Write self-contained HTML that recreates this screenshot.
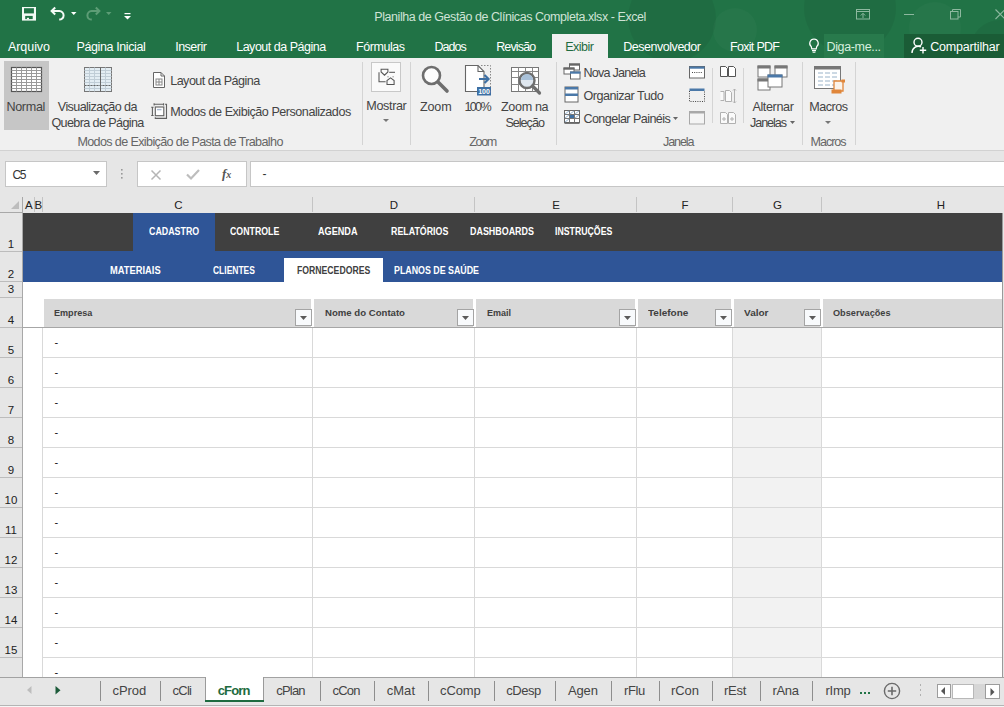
<!DOCTYPE html>
<html><head><meta charset="utf-8"><style>
html,body{margin:0;padding:0;}
body{width:1004px;height:707px;overflow:hidden;position:relative;background:#e6e6e6;font-family:'Liberation Sans',sans-serif;}
.t{position:absolute;white-space:nowrap;font-family:'Liberation Sans',sans-serif;}
.r{position:absolute;}
svg{position:absolute;overflow:visible;}

</style></head><body>
<!-- title + tabs green -->
<div class="r" style="left:0;top:0;width:1004px;height:58px;background:#217346"></div>
<!-- deco -->
<svg style="left:0;top:0" width="1004" height="58"><g fill="#000" fill-opacity="0.055">
<circle cx="672" cy="18" r="44"/><circle cx="850" cy="8" r="46"/><circle cx="1000" cy="50" r="30"/></g>
<g fill="#fff" fill-opacity="0.025"><circle cx="735" cy="30" r="22"/><circle cx="935" cy="28" r="26"/></g></svg>
<!-- Exibir tab -->
<div class="r" style="left:552px;top:34px;width:56px;height:24px;background:#f0f0f0"></div>
<!-- Diga-me box -->
<div class="r" style="left:824px;top:34px;width:60px;height:24px;background:#287a4c"></div>
<!-- Compartilhar box -->
<div class="r" style="left:904px;top:34px;width:100px;height:24px;background:#1a5c36"></div>
<!-- ribbon -->
<div class="r" style="left:0;top:58px;width:1004px;height:92px;background:#f0f0f0"></div>
<div class="r" style="left:0;top:150px;width:1004px;height:1px;background:#d2d2d2"></div>
<!-- Normal highlighted -->
<div class="r" style="left:4px;top:61px;width:45px;height:69px;background:#c6c6c6"></div>
<!-- separators -->
<div class="r" style="left:362px;top:62px;width:1px;height:83px;background:#d4d4d4"></div>
<div class="r" style="left:410px;top:62px;width:1px;height:83px;background:#d4d4d4"></div>
<div class="r" style="left:556px;top:62px;width:1px;height:83px;background:#d4d4d4"></div>
<div class="r" style="left:712px;top:68px;width:1px;height:55px;background:#d4d4d4"></div>
<div class="r" style="left:743px;top:68px;width:1px;height:55px;background:#d4d4d4"></div>
<div class="r" style="left:802px;top:62px;width:1px;height:83px;background:#d4d4d4"></div>
<div class="r" style="left:855px;top:62px;width:1px;height:83px;background:#d4d4d4"></div>
<!-- formula bar -->
<div class="r" style="left:5px;top:161px;width:100px;height:24px;background:#fff;border:1px solid #c6c6c6"></div>
<div class="r" style="left:137px;top:161px;width:108px;height:24px;background:#fff;border:1px solid #c6c6c6"></div>
<div class="r" style="left:250px;top:161px;width:760px;height:24px;background:#fff;border:1px solid #c6c6c6"></div>
<!-- sheet area white -->
<div class="r" style="left:23px;top:213px;width:979px;height:464px;background:#fff"></div>
<!-- G column fill -->
<div class="r" style="left:733px;top:328px;width:88px;height:349px;background:#f2f2f2"></div>
<!-- dark menu row -->
<div class="r" style="left:23px;top:213px;width:979px;height:38px;background:#404040"></div>
<div class="r" style="left:133px;top:213px;width:82px;height:38px;background:#2f5597"></div>
<div class="r" style="left:23px;top:251px;width:979px;height:31px;background:#2f5597"></div>
<div class="r" style="left:284px;top:258px;width:99px;height:24px;background:#fff"></div>
<!-- right sheet border -->
<div class="r" style="left:1002px;top:213px;width:1px;height:464px;background:#9a9a9a"></div>
<!-- GRID -->
<div class="r" style="left:34px;top:197px;width:1px;height:15px;background:#c4c4c4;"></div>
<div class="r" style="left:42px;top:197px;width:1px;height:15px;background:#c4c4c4;"></div>
<div class="r" style="left:312px;top:197px;width:1px;height:15px;background:#c4c4c4;"></div>
<div class="r" style="left:474px;top:197px;width:1px;height:15px;background:#c4c4c4;"></div>
<div class="r" style="left:636px;top:197px;width:1px;height:15px;background:#c4c4c4;"></div>
<div class="r" style="left:732px;top:197px;width:1px;height:15px;background:#c4c4c4;"></div>
<div class="r" style="left:821px;top:197px;width:1px;height:15px;background:#c4c4c4;"></div>
<div class="r" style="left:0px;top:212px;width:23px;height:1px;background:#a8a8a8;"></div>
<div class="r" style="left:22px;top:197px;width:1px;height:480px;background:#a8a8a8;"></div>
<svg style="left:11px;top:201px" width="9" height="9"><path d="M8 0 L8 8 L0 8 Z" fill="#bdbdbd"/></svg>
<div class="r" style="left:0px;top:251px;width:22px;height:1px;background:#bcbcbc;"></div>
<div class="r" style="left:0px;top:281px;width:22px;height:1px;background:#bcbcbc;"></div>
<div class="r" style="left:0px;top:297px;width:22px;height:1px;background:#bcbcbc;"></div>
<div class="r" style="left:0px;top:327px;width:22px;height:1px;background:#bcbcbc;"></div>
<div class="r" style="left:0px;top:357px;width:22px;height:1px;background:#bcbcbc;"></div>
<div class="r" style="left:0px;top:387px;width:22px;height:1px;background:#bcbcbc;"></div>
<div class="r" style="left:0px;top:417px;width:22px;height:1px;background:#bcbcbc;"></div>
<div class="r" style="left:0px;top:447px;width:22px;height:1px;background:#bcbcbc;"></div>
<div class="r" style="left:0px;top:477px;width:22px;height:1px;background:#bcbcbc;"></div>
<div class="r" style="left:0px;top:507px;width:22px;height:1px;background:#bcbcbc;"></div>
<div class="r" style="left:0px;top:537px;width:22px;height:1px;background:#bcbcbc;"></div>
<div class="r" style="left:0px;top:567px;width:22px;height:1px;background:#bcbcbc;"></div>
<div class="r" style="left:0px;top:597px;width:22px;height:1px;background:#bcbcbc;"></div>
<div class="r" style="left:0px;top:627px;width:22px;height:1px;background:#bcbcbc;"></div>
<div class="r" style="left:0px;top:657px;width:22px;height:1px;background:#bcbcbc;"></div>
<div class="r" style="left:42px;top:357px;width:960px;height:1px;background:#d9d9d9;"></div>
<div class="r" style="left:42px;top:387px;width:960px;height:1px;background:#d9d9d9;"></div>
<div class="r" style="left:42px;top:417px;width:960px;height:1px;background:#d9d9d9;"></div>
<div class="r" style="left:42px;top:447px;width:960px;height:1px;background:#d9d9d9;"></div>
<div class="r" style="left:42px;top:477px;width:960px;height:1px;background:#d9d9d9;"></div>
<div class="r" style="left:42px;top:507px;width:960px;height:1px;background:#d9d9d9;"></div>
<div class="r" style="left:42px;top:537px;width:960px;height:1px;background:#d9d9d9;"></div>
<div class="r" style="left:42px;top:567px;width:960px;height:1px;background:#d9d9d9;"></div>
<div class="r" style="left:42px;top:597px;width:960px;height:1px;background:#d9d9d9;"></div>
<div class="r" style="left:42px;top:627px;width:960px;height:1px;background:#d9d9d9;"></div>
<div class="r" style="left:42px;top:657px;width:960px;height:1px;background:#d9d9d9;"></div>
<div class="r" style="left:42px;top:328px;width:1px;height:349px;background:#d9d9d9;"></div>
<div class="r" style="left:312px;top:328px;width:1px;height:349px;background:#d9d9d9;"></div>
<div class="r" style="left:474px;top:328px;width:1px;height:349px;background:#d9d9d9;"></div>
<div class="r" style="left:636px;top:328px;width:1px;height:349px;background:#d9d9d9;"></div>
<div class="r" style="left:732px;top:328px;width:1px;height:349px;background:#d9d9d9;"></div>
<div class="r" style="left:821px;top:328px;width:1px;height:349px;background:#d9d9d9;"></div>
<div class="r" style="left:44px;top:299px;width:267px;height:28px;background:#d9d9d9;"></div>
<div class="r" style="left:314px;top:299px;width:159px;height:28px;background:#d9d9d9;"></div>
<div class="r" style="left:476px;top:299px;width:159px;height:28px;background:#d9d9d9;"></div>
<div class="r" style="left:638px;top:299px;width:93px;height:28px;background:#d9d9d9;"></div>
<div class="r" style="left:734px;top:299px;width:86px;height:28px;background:#d9d9d9;"></div>
<div class="r" style="left:823px;top:299px;width:179px;height:28px;background:#d9d9d9;"></div>
<div class="r" style="left:23px;top:327px;width:979px;height:1px;background:#a6a6a6;"></div>
<div class="r" style="left:295px;top:309px;width:15px;height:15px;background:#f8fafc;border:1px solid #a4a4a4"></div>
<svg style="left:300px;top:316px" width="8" height="5"><path d="M0 0 L7 0 L3.5 4 Z" fill="#5a5a5a"/></svg>
<div class="r" style="left:457px;top:309px;width:15px;height:15px;background:#f8fafc;border:1px solid #a4a4a4"></div>
<svg style="left:462px;top:316px" width="8" height="5"><path d="M0 0 L7 0 L3.5 4 Z" fill="#5a5a5a"/></svg>
<div class="r" style="left:619px;top:309px;width:15px;height:15px;background:#f8fafc;border:1px solid #a4a4a4"></div>
<svg style="left:624px;top:316px" width="8" height="5"><path d="M0 0 L7 0 L3.5 4 Z" fill="#5a5a5a"/></svg>
<div class="r" style="left:715px;top:309px;width:15px;height:15px;background:#f8fafc;border:1px solid #a4a4a4"></div>
<svg style="left:720px;top:316px" width="8" height="5"><path d="M0 0 L7 0 L3.5 4 Z" fill="#5a5a5a"/></svg>
<div class="r" style="left:804px;top:309px;width:15px;height:15px;background:#f8fafc;border:1px solid #a4a4a4"></div>
<svg style="left:809px;top:316px" width="8" height="5"><path d="M0 0 L7 0 L3.5 4 Z" fill="#5a5a5a"/></svg>
<!-- tab bar -->
<div class="r" style="left:0;top:677px;width:1004px;height:1px;background:#a2a2a2"></div>
<div class="r" style="left:0;top:678px;width:1004px;height:27px;background:#e6e6e6"></div>
<div class="r" style="left:0;top:705px;width:1004px;height:1px;background:#b4b4b4"></div>
<div class="r" style="left:0;top:706px;width:1004px;height:1px;background:#f6f6f6"></div>

<div class="r" style="left:100px;top:681px;width:1px;height:20px;background:#8e8e8e;"></div>
<div class="r" style="left:160px;top:681px;width:1px;height:20px;background:#8e8e8e;"></div>
<div class="r" style="left:320px;top:681px;width:1px;height:20px;background:#8e8e8e;"></div>
<div class="r" style="left:374px;top:681px;width:1px;height:20px;background:#8e8e8e;"></div>
<div class="r" style="left:428px;top:681px;width:1px;height:20px;background:#8e8e8e;"></div>
<div class="r" style="left:494px;top:681px;width:1px;height:20px;background:#8e8e8e;"></div>
<div class="r" style="left:555px;top:681px;width:1px;height:20px;background:#8e8e8e;"></div>
<div class="r" style="left:611px;top:681px;width:1px;height:20px;background:#8e8e8e;"></div>
<div class="r" style="left:659px;top:681px;width:1px;height:20px;background:#8e8e8e;"></div>
<div class="r" style="left:712px;top:681px;width:1px;height:20px;background:#8e8e8e;"></div>
<div class="r" style="left:760px;top:681px;width:1px;height:20px;background:#8e8e8e;"></div>
<div class="r" style="left:812px;top:681px;width:1px;height:20px;background:#8e8e8e;"></div>
<div class="r" style="left:205px;top:677px;width:1px;height:25px;background:#9a9a9a;"></div>
<div class="r" style="left:263px;top:677px;width:1px;height:25px;background:#9a9a9a;"></div>
<div class="r" style="left:206px;top:677px;width:57px;height:23px;background:#ffffff;"></div>
<div class="r" style="left:205px;top:700px;width:59px;height:2px;background:#1e6b40;"></div>
<svg style="left:27px;top:686px" width="5" height="8" viewBox="0 0 5 8"><path d="M4.5 0 L4.5 8 L0 4 Z" fill="#bdbdbd"/></svg>
<svg style="left:55px;top:686px" width="6" height="9" viewBox="0 0 6 9"><path d="M0.5 0 L0.5 8.5 L5.5 4.25 Z" fill="#1d5b3a"/></svg>
<div class="r" style="left:860px;top:692px;width:2px;height:2px;background:#217346;"></div>
<div class="r" style="left:864px;top:692px;width:2px;height:2px;background:#217346;"></div>
<div class="r" style="left:868px;top:692px;width:2px;height:2px;background:#217346;"></div>
<svg style="left:883px;top:682px" width="18" height="18" viewBox="0 0 18 18"><circle cx="9" cy="9" r="7.6" fill="none" stroke="#6a6a6a" stroke-width="1.4"/><path d="M9 4.8 V13.2 M4.8 9 H13.2" stroke="#6a6a6a" stroke-width="1.6"/></svg>
<div class="r" style="left:920px;top:684px;width:1px;height:2px;background:#b0b0b0;"></div>
<div class="r" style="left:920px;top:689px;width:1px;height:2px;background:#b0b0b0;"></div>
<div class="r" style="left:920px;top:694px;width:1px;height:2px;background:#b0b0b0;"></div>
<div class="r" style="left:937px;top:684px;width:14px;height:14px;background:#fff;box-sizing:border-box;border:1px solid #9c9c9c"></div>
<svg style="left:941px;top:687px" width="5" height="8" viewBox="0 0 5 8"><path d="M4 0 L4 8 L0 4 Z" fill="#555"/></svg>
<div class="r" style="left:952px;top:684px;width:22px;height:15px;background:#fff;box-sizing:border-box;border:1px solid #b8b8b8"></div>
<div class="r" style="left:974px;top:684px;width:11px;height:15px;background:#d6d6d6;"></div>
<div class="r" style="left:985px;top:684px;width:15px;height:15px;background:#fff;box-sizing:border-box;border:1px solid #9c9c9c"></div>
<svg style="left:990px;top:688px" width="5" height="8" viewBox="0 0 5 8"><path d="M0.5 0 L0.5 8 L4.5 4 Z" fill="#555"/></svg>
<div class="t" style="left:374.3px;top:11.4px;font-size:12.5px;line-height:12.5px;color:#cfe3d6;letter-spacing:-0.443px;">Planilha de Gestão de Clínicas Completa.xlsx - Excel</div>
<div class="t" style="left:8.0px;top:41.1px;font-size:12.5px;line-height:12.5px;color:#ffffff;letter-spacing:-0.065px;">Arquivo</div>
<div class="t" style="left:76.5px;top:41.1px;font-size:12.5px;line-height:12.5px;color:#ffffff;letter-spacing:-0.389px;">Página Inicial</div>
<div class="t" style="left:175.2px;top:41.1px;font-size:12.5px;line-height:12.5px;color:#ffffff;letter-spacing:-0.506px;">Inserir</div>
<div class="t" style="left:236.2px;top:41.1px;font-size:12.5px;line-height:12.5px;color:#ffffff;letter-spacing:-0.487px;">Layout da Página</div>
<div class="t" style="left:356.0px;top:41.1px;font-size:12.5px;line-height:12.5px;color:#ffffff;letter-spacing:-0.442px;">Fórmulas</div>
<div class="t" style="left:434.4px;top:41.1px;font-size:12.5px;line-height:12.5px;color:#ffffff;letter-spacing:-0.935px;">Dados</div>
<div class="t" style="left:496.2px;top:41.1px;font-size:12.5px;line-height:12.5px;color:#ffffff;letter-spacing:-0.862px;">Revisão</div>
<div class="t" style="left:623.3px;top:41.1px;font-size:12.5px;line-height:12.5px;color:#ffffff;letter-spacing:-0.474px;">Desenvolvedor</div>
<div class="t" style="left:730.0px;top:41.1px;font-size:12.5px;line-height:12.5px;color:#ffffff;letter-spacing:-0.695px;">Foxit PDF</div>
<div class="t" style="left:826.5px;top:41.1px;font-size:12.5px;line-height:12.5px;color:#d6efdf;letter-spacing:-0.351px;">Diga-me...</div>
<div class="t" style="left:930.2px;top:41.1px;font-size:12.5px;line-height:12.5px;color:#ffffff;letter-spacing:-0.178px;">Compartilhar</div>
<div class="t" style="left:565.2px;top:41.1px;font-size:12.5px;line-height:12.5px;color:#1e6b40;letter-spacing:-0.493px;">Exibir</div>
<div class="t" style="left:6.4px;top:101.1px;font-size:12.6px;line-height:12.6px;color:#444444;letter-spacing:-0.319px;">Normal</div>
<div class="t" style="left:57.8px;top:101.1px;font-size:12.6px;line-height:12.6px;color:#444444;letter-spacing:-0.592px;">Visualização da</div>
<div class="t" style="left:51.4px;top:117.1px;font-size:12.6px;line-height:12.6px;color:#444444;letter-spacing:-0.616px;">Quebra de Página</div>
<div class="t" style="left:170.2px;top:75.1px;font-size:12.6px;line-height:12.6px;color:#444444;letter-spacing:-0.536px;">Layout da Página</div>
<div class="t" style="left:170.2px;top:106.1px;font-size:12.6px;line-height:12.6px;color:#444444;letter-spacing:-0.484px;">Modos de Exibição Personalizados</div>
<div class="t" style="left:77.4px;top:136.1px;font-size:12.6px;line-height:12.6px;color:#666666;letter-spacing:-0.639px;">Modos de Exibição de Pasta de Trabalho</div>
<div class="t" style="left:366.3px;top:99.6px;font-size:12.6px;line-height:12.6px;color:#444444;letter-spacing:-0.365px;">Mostrar</div>
<div class="t" style="left:420.0px;top:101.1px;font-size:12.6px;line-height:12.6px;color:#444444;letter-spacing:-0.168px;">Zoom</div>
<div class="t" style="left:464.5px;top:101.1px;font-size:12.6px;line-height:12.6px;color:#444444;letter-spacing:-1.706px;">100%</div>
<div class="t" style="left:501.0px;top:101.1px;font-size:12.6px;line-height:12.6px;color:#444444;letter-spacing:-0.351px;">Zoom na</div>
<div class="t" style="left:505.4px;top:117.1px;font-size:12.6px;line-height:12.6px;color:#444444;letter-spacing:-1.003px;">Seleção</div>
<div class="t" style="left:469.3px;top:136.1px;font-size:12.6px;line-height:12.6px;color:#666666;letter-spacing:-1.401px;">Zoom</div>
<div class="t" style="left:583.4px;top:67.1px;font-size:12.6px;line-height:12.6px;color:#444444;letter-spacing:-0.762px;">Nova Janela</div>
<div class="t" style="left:583.4px;top:90.1px;font-size:12.6px;line-height:12.6px;color:#444444;letter-spacing:-0.493px;">Organizar Tudo</div>
<div class="t" style="left:583.4px;top:113.1px;font-size:12.6px;line-height:12.6px;color:#444444;letter-spacing:-0.568px;">Congelar Painéis</div>
<div class="t" style="left:663.0px;top:136.1px;font-size:12.6px;line-height:12.6px;color:#666666;letter-spacing:-1.125px;">Janela</div>
<div class="t" style="left:752.4px;top:101.1px;font-size:12.6px;line-height:12.6px;color:#444444;letter-spacing:-0.373px;">Alternar</div>
<div class="t" style="left:750.0px;top:116.6px;font-size:12.6px;line-height:12.6px;color:#444444;letter-spacing:-1.070px;">Janelas</div>
<div class="t" style="left:809.3px;top:101.1px;font-size:12.6px;line-height:12.6px;color:#444444;letter-spacing:-0.519px;">Macros</div>
<div class="t" style="left:810.6px;top:135.6px;font-size:12.6px;line-height:12.6px;color:#666666;letter-spacing:-1.059px;">Macros</div>
<div class="t" style="left:12.5px;top:168.8px;font-size:12px;line-height:12px;color:#333;letter-spacing:-1.344px;">C5</div>
<div class="t" style="left:262.4px;top:167.8px;font-size:12px;line-height:12px;color:#333;">-</div>
<div class="t" style="left:25.0px;top:199.5px;font-size:11.5px;line-height:11.5px;color:#222;">A</div>
<div class="t" style="left:34.5px;top:199.5px;font-size:11.5px;line-height:11.5px;color:#222;">B</div>
<div class="t" style="left:174.3px;top:199.5px;font-size:11.5px;line-height:11.5px;color:#222;">C</div>
<div class="t" style="left:389.8px;top:199.5px;font-size:11.5px;line-height:11.5px;color:#222;">D</div>
<div class="t" style="left:552.2px;top:199.5px;font-size:11.5px;line-height:11.5px;color:#222;">E</div>
<div class="t" style="left:681.5px;top:199.5px;font-size:11.5px;line-height:11.5px;color:#222;">F</div>
<div class="t" style="left:773.0px;top:199.5px;font-size:11.5px;line-height:11.5px;color:#222;">G</div>
<div class="t" style="left:936.8px;top:199.5px;font-size:11.5px;line-height:11.5px;color:#222;">H</div>
<div class="t" style="left:7.8px;top:239.4px;font-size:11.5px;line-height:11.5px;color:#222;">1</div>
<div class="t" style="left:7.8px;top:269.4px;font-size:11.5px;line-height:11.5px;color:#222;">2</div>
<div class="t" style="left:7.8px;top:283.9px;font-size:11.5px;line-height:11.5px;color:#222;">3</div>
<div class="t" style="left:7.8px;top:315.2px;font-size:11.5px;line-height:11.5px;color:#222;">4</div>
<div class="t" style="left:7.8px;top:345.2px;font-size:11.5px;line-height:11.5px;color:#222;">5</div>
<div class="t" style="left:7.8px;top:375.2px;font-size:11.5px;line-height:11.5px;color:#222;">6</div>
<div class="t" style="left:7.8px;top:405.2px;font-size:11.5px;line-height:11.5px;color:#222;">7</div>
<div class="t" style="left:7.8px;top:435.2px;font-size:11.5px;line-height:11.5px;color:#222;">8</div>
<div class="t" style="left:7.8px;top:465.2px;font-size:11.5px;line-height:11.5px;color:#222;">9</div>
<div class="t" style="left:4.6px;top:495.2px;font-size:11.5px;line-height:11.5px;color:#222;">10</div>
<div class="t" style="left:5.0px;top:525.2px;font-size:11.5px;line-height:11.5px;color:#222;">11</div>
<div class="t" style="left:4.6px;top:555.2px;font-size:11.5px;line-height:11.5px;color:#222;">12</div>
<div class="t" style="left:4.6px;top:585.2px;font-size:11.5px;line-height:11.5px;color:#222;">13</div>
<div class="t" style="left:4.6px;top:615.2px;font-size:11.5px;line-height:11.5px;color:#222;">14</div>
<div class="t" style="left:4.6px;top:645.2px;font-size:11.5px;line-height:11.5px;color:#222;">15</div>
<div class="t" style="left:148.7px;top:227.1px;font-size:10px;line-height:10px;font-weight:bold;color:#ffffff;transform:scaleX(0.8858);transform-origin:0 0;">CADASTRO</div>
<div class="t" style="left:230.4px;top:227.1px;font-size:10px;line-height:10px;font-weight:bold;color:#ffffff;transform:scaleX(0.8786);transform-origin:0 0;">CONTROLE</div>
<div class="t" style="left:317.6px;top:227.1px;font-size:10px;line-height:10px;font-weight:bold;color:#ffffff;transform:scaleX(0.9113);transform-origin:0 0;">AGENDA</div>
<div class="t" style="left:391.2px;top:227.1px;font-size:10px;line-height:10px;font-weight:bold;color:#ffffff;transform:scaleX(0.8839);transform-origin:0 0;">RELATÓRIOS</div>
<div class="t" style="left:470.0px;top:227.1px;font-size:10px;line-height:10px;font-weight:bold;color:#ffffff;transform:scaleX(0.8916);transform-origin:0 0;">DASHBOARDS</div>
<div class="t" style="left:555.4px;top:227.1px;font-size:10px;line-height:10px;font-weight:bold;color:#ffffff;transform:scaleX(0.8740);transform-origin:0 0;">INSTRUÇÕES</div>
<div class="t" style="left:109.9px;top:265.9px;font-size:10px;line-height:10px;font-weight:bold;color:#fff;transform:scaleX(0.9325);transform-origin:0 0;">MATERIAIS</div>
<div class="t" style="left:213.4px;top:265.9px;font-size:10px;line-height:10px;font-weight:bold;color:#fff;transform:scaleX(0.8473);transform-origin:0 0;">CLIENTES</div>
<div class="t" style="left:297.2px;top:265.9px;font-size:10px;line-height:10px;font-weight:bold;color:#404040;transform:scaleX(0.8668);transform-origin:0 0;">FORNECEDORES</div>
<div class="t" style="left:394.0px;top:265.9px;font-size:10px;line-height:10px;font-weight:bold;color:#fff;transform:scaleX(0.8843);transform-origin:0 0;">PLANOS DE SAÚDE</div>
<div class="t" style="left:54.3px;top:307.8px;font-size:9.6px;line-height:9.6px;font-weight:bold;color:#404040;transform:scaleX(0.9449);transform-origin:0 0;">Empresa</div>
<div class="t" style="left:324.5px;top:307.8px;font-size:9.6px;line-height:9.6px;font-weight:bold;color:#404040;transform:scaleX(1.0006);transform-origin:0 0;">Nome do Contato</div>
<div class="t" style="left:486.5px;top:307.8px;font-size:9.6px;line-height:9.6px;font-weight:bold;color:#404040;transform:scaleX(0.9372);transform-origin:0 0;">Email</div>
<div class="t" style="left:648.0px;top:307.8px;font-size:9.6px;line-height:9.6px;font-weight:bold;color:#404040;transform:scaleX(1.0400);transform-origin:0 0;">Telefone</div>
<div class="t" style="left:744.4px;top:307.8px;font-size:9.6px;line-height:9.6px;font-weight:bold;color:#404040;transform:scaleX(1.0439);transform-origin:0 0;">Valor</div>
<div class="t" style="left:833.4px;top:307.8px;font-size:9.6px;line-height:9.6px;font-weight:bold;color:#404040;transform:scaleX(0.9541);transform-origin:0 0;">Observações</div>
<div class="t" style="left:54.5px;top:336.6px;font-size:11px;line-height:11px;color:#111;">-</div>
<div class="t" style="left:54.5px;top:366.6px;font-size:11px;line-height:11px;color:#111;">-</div>
<div class="t" style="left:54.5px;top:396.6px;font-size:11px;line-height:11px;color:#111;">-</div>
<div class="t" style="left:54.5px;top:426.6px;font-size:11px;line-height:11px;color:#111;">-</div>
<div class="t" style="left:54.5px;top:456.6px;font-size:11px;line-height:11px;color:#111;">-</div>
<div class="t" style="left:54.5px;top:486.6px;font-size:11px;line-height:11px;color:#111;">-</div>
<div class="t" style="left:54.5px;top:516.6px;font-size:11px;line-height:11px;color:#111;">-</div>
<div class="t" style="left:54.5px;top:546.6px;font-size:11px;line-height:11px;color:#111;">-</div>
<div class="t" style="left:54.5px;top:576.6px;font-size:11px;line-height:11px;color:#111;">-</div>
<div class="t" style="left:54.5px;top:606.6px;font-size:11px;line-height:11px;color:#111;">-</div>
<div class="t" style="left:54.5px;top:636.6px;font-size:11px;line-height:11px;color:#111;">-</div>
<div class="t" style="left:54.5px;top:666.6px;font-size:11px;line-height:11px;color:#111;">-</div>
<div class="t" style="left:112.5px;top:684.0px;font-size:13px;line-height:13px;color:#444;letter-spacing:-0.042px;">cProd</div>
<div class="t" style="left:172.6px;top:684.0px;font-size:13px;line-height:13px;color:#444;letter-spacing:-0.757px;">cCli</div>
<div class="t" style="left:276.3px;top:684.0px;font-size:13px;line-height:13px;color:#444;letter-spacing:-0.808px;">cPlan</div>
<div class="t" style="left:332.4px;top:684.0px;font-size:13px;line-height:13px;color:#444;letter-spacing:-0.753px;">cCon</div>
<div class="t" style="left:386.7px;top:684.0px;font-size:13px;line-height:13px;color:#444;letter-spacing:0.043px;">cMat</div>
<div class="t" style="left:440.0px;top:684.0px;font-size:13px;line-height:13px;color:#444;letter-spacing:-0.097px;">cComp</div>
<div class="t" style="left:506.2px;top:684.0px;font-size:13px;line-height:13px;color:#444;letter-spacing:-0.465px;">cDesp</div>
<div class="t" style="left:567.9px;top:684.0px;font-size:13px;line-height:13px;color:#444;letter-spacing:-0.125px;">Agen</div>
<div class="t" style="left:624.0px;top:684.0px;font-size:13px;line-height:13px;color:#444;letter-spacing:-0.364px;">rFlu</div>
<div class="t" style="left:671.0px;top:684.0px;font-size:13px;line-height:13px;color:#444;letter-spacing:-0.062px;">rCon</div>
<div class="t" style="left:723.9px;top:684.0px;font-size:13px;line-height:13px;color:#444;letter-spacing:-0.175px;">rEst</div>
<div class="t" style="left:772.5px;top:684.0px;font-size:13px;line-height:13px;color:#444;letter-spacing:-0.323px;">rAna</div>
<div class="t" style="left:825.4px;top:684.0px;font-size:13px;line-height:13px;color:#444;letter-spacing:-0.200px;">rImp</div>
<div class="t" style="left:217.7px;top:684.0px;font-size:13px;line-height:13px;font-weight:bold;color:#1e6b40;letter-spacing:-0.856px;">cForn</div>
<svg style="left:22px;top:7px;" width="14" height="14" viewBox="0 0 14 14"><rect x="0" y="0" width="14" height="13.6" fill="#f4fbf6"/><rect x="2" y="1.2" width="9.9" height="5.2" fill="#217346"/><rect x="3.2" y="8.9" width="7.5" height="3.2" fill="#217346"/><rect x="4.9" y="10.8" width="2.1" height="1.4" fill="#f4fbf6"/></svg>
<svg style="left:50px;top:6px;" width="16" height="16" viewBox="0 0 16 16"><path d="M5.2 1.5 L1.6 5 L5.2 8.5" fill="none" stroke="#f4fbf6" stroke-width="2"/><path d="M2 5 H9.4 A4.3 4.3 0 0 1 9.2 13.6" fill="none" stroke="#f4fbf6" stroke-width="2"/></svg>
<svg style="left:71px;top:12px;" width="6" height="4" viewBox="0 0 6 4"><path d="M0 0 L5.5 0 L2.75 3 Z" fill="#fff"/></svg>
<svg style="left:85px;top:6px;" width="16" height="16" viewBox="0 0 16 16"><path d="M10.8 1.5 L14.4 5 L10.8 8.5" fill="none" stroke="#5d9d76" stroke-width="2"/><path d="M14 5 H6.6 A4.3 4.3 0 0 0 6.8 13.6" fill="none" stroke="#5d9d76" stroke-width="2"/></svg>
<svg style="left:106px;top:12px;" width="6" height="4" viewBox="0 0 6 4"><path d="M0 0 L5.5 0 L2.75 3 Z" fill="#5d9d76"/></svg>
<svg style="left:124px;top:13px;" width="7" height="7" viewBox="0 0 7 7"><rect x="0.5" y="0" width="6" height="1.2" fill="#fff"/><path d="M0 3 L7 3 L3.5 6.5 Z" fill="#fff"/></svg>
<svg style="left:856px;top:9px;" width="14" height="11" viewBox="0 0 14 11"><rect x="0.5" y="0.5" width="13" height="9.5" fill="none" stroke="#8db89f"/><path d="M0.5 2.5 H13.5" stroke="#8db89f"/><path d="M7 9 V4.5 M4.8 6.5 L7 4.3 L9.2 6.5" stroke="#8db89f" fill="none"/></svg>
<svg style="left:904px;top:14px;" width="11" height="2" viewBox="0 0 11 2"><rect x="0" y="0" width="10" height="1" fill="#8db89f"/></svg>
<svg style="left:950px;top:9px;" width="11" height="11" viewBox="0 0 11 11"><rect x="0.5" y="2.5" width="7.5" height="7.5" fill="none" stroke="#8db89f"/><path d="M2.5 2.5 V0.5 H10.5 V8 H8" fill="none" stroke="#8db89f"/></svg>
<svg style="left:995px;top:9px;" width="10" height="11" viewBox="0 0 10 11"><path d="M0.5 0.5 L10 10 M10 0.5 L0.5 10" stroke="#8db89f" stroke-width="1.1"/></svg>
<svg style="left:808px;top:38px;" width="12" height="15" viewBox="0 0 12 15"><path d="M6 1 A4.3 4.3 0 0 0 3.3 8.6 L3.8 10.8 H8.2 L8.7 8.6 A4.3 4.3 0 0 0 6 1 Z" fill="none" stroke="#fff" stroke-width="1.2"/><path d="M4 12.6 H8 M4.6 14.2 H7.4" stroke="#fff" stroke-width="1.1"/></svg>
<svg style="left:911px;top:37px;" width="16" height="17" viewBox="0 0 16 17"><circle cx="7" cy="5.2" r="4" fill="none" stroke="#fff" stroke-width="1.4"/><path d="M1 16 A6.5 6.5 0 0 1 10 9.8" fill="none" stroke="#fff" stroke-width="1.4"/><path d="M12 10 V16.5 M8.8 13.2 H15.2" stroke="#fff" stroke-width="1.4"/></svg>
<svg style="left:11px;top:67px;" width="31" height="25" viewBox="0 0 31 25"><rect x="0.5" y="0.5" width="30" height="24" fill="#fff" stroke="#555" stroke-width="1.2"/><path d="M5.5 0.5 V24.5" stroke="#9a9a9a" stroke-width="1"/><path d="M10.5 0.5 V24.5" stroke="#9a9a9a" stroke-width="1"/><path d="M15.5 0.5 V24.5" stroke="#9a9a9a" stroke-width="1"/><path d="M20.5 0.5 V24.5" stroke="#9a9a9a" stroke-width="1"/><path d="M25.5 0.5 V24.5" stroke="#9a9a9a" stroke-width="1"/><path d="M0.5 3.5 H30.5" stroke="#9a9a9a" stroke-width="1"/><path d="M0.5 6.5 H30.5" stroke="#9a9a9a" stroke-width="1"/><path d="M0.5 9.5 H30.5" stroke="#9a9a9a" stroke-width="1"/><path d="M0.5 12.5 H30.5" stroke="#9a9a9a" stroke-width="1"/><path d="M0.5 15.5 H30.5" stroke="#9a9a9a" stroke-width="1"/><path d="M0.5 18.5 H30.5" stroke="#9a9a9a" stroke-width="1"/><path d="M0.5 21.5 H30.5" stroke="#9a9a9a" stroke-width="1"/></svg>
<svg style="left:84px;top:67px;" width="28" height="25" viewBox="0 0 28 25"><rect x="0.5" y="0.5" width="27" height="24" fill="#e3edf3" stroke="#777" stroke-width="1"/><path d="M5.5 0.5 V24.5" stroke="#c0cdd6" stroke-width="1"/><path d="M10.5 0.5 V24.5" stroke="#c0cdd6" stroke-width="1"/><path d="M21.5 0.5 V24.5" stroke="#c0cdd6" stroke-width="1"/><path d="M0.5 3.5 H27.5" stroke="#c0cdd6" stroke-width="1"/><path d="M0.5 6.5 H27.5" stroke="#c0cdd6" stroke-width="1"/><path d="M0.5 9.5 H27.5" stroke="#c0cdd6" stroke-width="1"/><path d="M0.5 12.5 H27.5" stroke="#c0cdd6" stroke-width="1"/><path d="M0.5 15.5 H27.5" stroke="#c0cdd6" stroke-width="1"/><path d="M0.5 18.5 H27.5" stroke="#c0cdd6" stroke-width="1"/><path d="M0.5 21.5 H27.5" stroke="#c0cdd6" stroke-width="1"/><path d="M16.5 0.5 V24.5" stroke="#666" stroke-width="1"/><path d="M0.5 18.5 H27.5" stroke="#666" stroke-width="1" stroke-dasharray="2 1"/></svg>
<svg style="left:153px;top:72px;" width="12" height="16" viewBox="0 0 12 16"><path d="M0.5 0.5 H8 L11.5 4 V15.5 H0.5 Z" fill="#fff" stroke="#666"/><path d="M8 0.5 V4 H11.5" fill="none" stroke="#666"/><rect x="3" y="7" width="6" height="6" fill="none" stroke="#888"/><path d="M6 7 V13 M3 10 H9" stroke="#888"/></svg>
<svg style="left:150px;top:102px;" width="18" height="18" viewBox="0 0 18 18"><g stroke="#606060" stroke-width="1.1" fill="none"><path d="M4.1 2.3 H13.6 M4.1 1.2 V3.4 M13.6 1.2 V3.4 M2.4 5.2 V13.5 M1.2 5.2 H3.6 M1.2 13.5 H3.6"/><rect x="5.3" y="5" width="8.5" height="8.7" fill="#fff"/><path d="M15 2.3 H16.5 V16.4 H5.3 V15.2"/></g><path d="M7 7.6 H11.5" stroke="#a8b8d0" stroke-width="1.4"/></svg>
<svg style="left:371px;top:62px;" width="30" height="30" viewBox="0 0 30 30"><rect x="0.5" y="0.5" width="29" height="29" fill="#fafafa" stroke="#c8c8c8"/><g fill="none" stroke="#555" stroke-width="1.05"><path d="M8 10.3 V19.8 H14.6"/><path d="M10.1 7.2 H16.9 V10 L13.5 13.2 L10.1 10 Z"/><path d="M18.2 10.3 H24"/><path d="M16 22.4 V18.6 L19.55 15.9 L23.1 18.6 V22.4 Z"/></g><rect x="16.5" y="14.3" width="1" height="1" fill="#666"/><rect x="21.6" y="14.3" width="1" height="1" fill="#666"/></svg>
<svg style="left:383px;top:119px;" width="7" height="4" viewBox="0 0 7 4"><path d="M0 0 L6 0 L3 3 Z" fill="#777"/></svg>
<svg style="left:421px;top:65px;" width="30" height="30" viewBox="0 0 30 30"><circle cx="10.5" cy="10.5" r="8.5" fill="#fdfdfd" stroke="#6e6e6e" stroke-width="2.6"/><path d="M17 17 L26 26" stroke="#6e6e6e" stroke-width="3.6" stroke-linecap="round"/></svg>
<svg style="left:464px;top:64px;" width="30" height="33" viewBox="0 0 30 33"><path d="M1.5 1.5 H14 L20 7.5 V27.5 H1.5 Z" fill="#fff" stroke="#666" stroke-width="1.1"/><path d="M14 1.5 V7.5 H20" fill="none" stroke="#666" stroke-width="1.1"/><path d="M17 1.5 H26.5 V23" fill="none" stroke="#888" stroke-dasharray="1.5 1.5"/><path d="M15 15 H24 M20.5 11 L24.5 15 L20.5 19" fill="none" stroke="#3d6fa3" stroke-width="2.2"/><rect x="13" y="23" width="14" height="8.5" fill="#3d6fa3"/><text x="20" y="30" font-size="7" font-family="Liberation Sans" font-weight="bold" fill="#fff" text-anchor="middle">100</text></svg>
<svg style="left:511px;top:67px;" width="30" height="29" viewBox="0 0 30 29"><rect x="0.5" y="0.5" width="27" height="24" fill="#fff" stroke="#777"/><path d="M7.5 0.5 V24.5" stroke="#888"/><path d="M14.5 0.5 V24.5" stroke="#888"/><path d="M21.5 0.5 V24.5" stroke="#888"/><path d="M0.5 4.5 H27.5" stroke="#888"/><path d="M0.5 10.5 H27.5" stroke="#888"/><path d="M0.5 17.5 H27.5" stroke="#888"/><circle cx="16" cy="13.5" r="7.5" fill="#dfe7ef" stroke="#6e6e6e" stroke-width="2.4"/><path d="M10 13 A6 6 0 0 1 22 13 Z" fill="#a9c1d9"/><path d="M21.5 19 L28.5 26" stroke="#6e6e6e" stroke-width="3.2" stroke-linecap="round"/></svg>
<svg style="left:563px;top:63px;" width="18" height="17" viewBox="0 0 18 17"><rect x="6.5" y="1" width="10" height="6" fill="#fff" stroke="#666"/><rect x="6" y="0.5" width="11" height="2.2" fill="#666"/><rect x="1" y="5" width="10" height="6" fill="#fff" stroke="#666"/><rect x="0.5" y="4.5" width="11" height="2.2" fill="#666"/><rect x="7.5" y="9" width="9.5" height="7" fill="#fff" stroke="#666"/><rect x="7" y="8.5" width="10.5" height="2.2" fill="#4a78a8"/></svg>
<svg style="left:564px;top:86px;" width="15" height="17" viewBox="0 0 15 17"><rect x="1" y="1" width="13" height="15" fill="#fff" stroke="#666"/><rect x="1" y="1" width="13" height="2.5" fill="#4a78a8"/><rect x="1" y="7.5" width="13" height="2.5" fill="#4a78a8"/></svg>
<svg style="left:564px;top:110px;" width="16" height="15" viewBox="0 0 16 15"><rect x="0.5" y="0.5" width="15" height="12" fill="#fff" stroke="#666"/><path d="M5.5 0.5 V12.5 M10.5 0.5 V12.5 M0.5 4.5 H15.5 M0.5 8.5 H15.5" stroke="#777"/><rect x="6" y="5" width="4" height="3" fill="#3d6fa3"/><path d="M0.5 13.5 H15.5" stroke="#777"/><path d="M1 4 L5 1 M6 4 L10 1 M11 4 L15 1 M1 8 L5 5 M1 12 L5 9 M11 8 L15 5" stroke="#7ea4c8" stroke-width="0.8"/></svg>
<svg style="left:673px;top:117px;" width="6" height="4" viewBox="0 0 6 4"><path d="M0 0 L5 0 L2.5 3 Z" fill="#666"/></svg>
<svg style="left:689px;top:66px;" width="16" height="13" viewBox="0 0 16 13"><rect x="0.5" y="0.5" width="15" height="11.5" fill="#fff" stroke="#666"/><rect x="0.5" y="0.5" width="15" height="2.2" fill="#4a78a8"/><path d="M3 6.5 H13.5" stroke="#444" stroke-dasharray="1 1.2"/></svg>
<svg style="left:689px;top:88px;" width="16" height="15" viewBox="0 0 16 15"><rect x="0.5" y="0.5" width="15" height="2.5" fill="#4a78a8"/><path d="M0.5 3 V13.5 H15.5 V3" fill="none" stroke="#444" stroke-dasharray="1 1.3"/></svg>
<svg style="left:689px;top:111px;" width="16" height="14" viewBox="0 0 16 14"><rect x="0.5" y="0.5" width="15" height="12.5" fill="#f4f4f4" stroke="#a8a8a8"/><rect x="0.5" y="0.5" width="15" height="2" fill="#a8a8a8"/></svg>
<svg style="left:720px;top:66px;" width="17" height="12" viewBox="0 0 17 12"><path d="M0.5 0.5 H5.5 L7.5 2.5 V10.5 H0.5 Z M8.5 0.5 H13.5 L15.5 2.5 V10.5 H8.5 Z" fill="#fff" stroke="#555"/></svg>
<svg style="left:720px;top:88px;" width="17" height="16" viewBox="0 0 17 16"><path d="M0.5 3.5 H4 V12.5 H0.5 M5.5 2.5 H9.5 L11.5 4.5 V13.5 H5.5 Z" fill="#fafafa" stroke="#b0b0b0"/><path d="M14.5 1 V15 M13 2.5 L14.5 1 L16 2.5 M13 13.5 L14.5 15 L16 13.5" stroke="#b0b0b0" fill="none"/></svg>
<svg style="left:720px;top:112px;" width="17" height="13" viewBox="0 0 17 13"><path d="M0.5 0.5 H5.5 L7.5 2.5 V11.5 H0.5 Z M8.5 0.5 H13.5 L15.5 2.5 V11.5 H8.5 Z" fill="#fafafa" stroke="#b0b0b0"/><path d="M2 7 H6 M4 5 V9 M10 7 H14 M12 5 V9" stroke="#b0b0b0"/></svg>
<svg style="left:757px;top:65px;" width="32" height="27" viewBox="0 0 32 27"><rect x="1" y="1" width="12" height="11" fill="#fff" stroke="#777"/><rect x="0.5" y="0.5" width="13" height="3" fill="#777"/><rect x="18" y="1" width="12" height="11" fill="#fff" stroke="#777"/><rect x="17.5" y="0.5" width="13" height="3" fill="#777"/><rect x="1" y="14" width="12" height="11" fill="#fff" stroke="#777"/><rect x="0.5" y="13.5" width="13" height="3" fill="#777"/><rect x="11" y="10" width="14" height="12" fill="#fff" stroke="#777"/><rect x="10.5" y="9.5" width="15" height="3" fill="#4a78a8"/></svg>
<svg style="left:790px;top:121px;" width="6" height="4" viewBox="0 0 6 4"><path d="M0 0 L5 0 L2.5 3 Z" fill="#666"/></svg>
<svg style="left:814px;top:66px;" width="32" height="29" viewBox="0 0 32 29"><rect x="0.5" y="0.5" width="26" height="22" fill="#fff" stroke="#777"/><rect x="0.5" y="0.5" width="26" height="3" fill="#777"/><path d="M4 7 H9 M11 7 H16 M18 7 H23" stroke="#9ab3c9" stroke-width="1"/><path d="M4 11 H9 M11 11 H16 M18 11 H23" stroke="#9ab3c9" stroke-width="1"/><path d="M4 15 H9 M11 15 H16 M18 15 H23" stroke="#9ab3c9" stroke-width="1"/><path d="M4 19 H9 M11 19 H16 M18 19 H23" stroke="#9ab3c9" stroke-width="1"/><path d="M20 15 H29 V25 H20 Z" fill="#fbf3ea" stroke="#e0863a" stroke-width="1.3"/><rect x="17.5" y="23.5" width="10" height="4" fill="#e0863a"/><rect x="27.5" y="13.5" width="3.5" height="3" fill="#e0863a"/></svg>
<svg style="left:825px;top:121px;" width="7" height="4" viewBox="0 0 7 4"><path d="M0 0 L6 0 L3 3 Z" fill="#777"/></svg>
<svg style="left:93px;top:171px;" width="8" height="5" viewBox="0 0 8 5"><path d="M0 0 L7 0 L3.5 4 Z" fill="#6a6a6a"/></svg>
<svg style="left:121px;top:169px;" width="2" height="11" viewBox="0 0 2 11"><rect x="0" y="0" width="1.6" height="1.6" fill="#999"/><rect x="0" y="4" width="1.6" height="1.6" fill="#999"/><rect x="0" y="8" width="1.6" height="1.6" fill="#999"/></svg>
<svg style="left:151px;top:170px;" width="10" height="10" viewBox="0 0 10 10"><path d="M0.5 0.5 L9.5 9.5 M9.5 0.5 L0.5 9.5" stroke="#b5b5b5" stroke-width="1.5"/></svg>
<svg style="left:186px;top:169px;" width="14" height="11" viewBox="0 0 14 11"><path d="M1 5.5 L5 9.5 L13 1" fill="none" stroke="#bdbdbd" stroke-width="2.2"/></svg>
<div class="t" style="left:222px;top:166px;font-family:'Liberation Serif',serif;font-style:italic;font-size:13px;color:#555;font-weight:bold">f<span style="font-size:10px">x</span></div>
</body></html>
